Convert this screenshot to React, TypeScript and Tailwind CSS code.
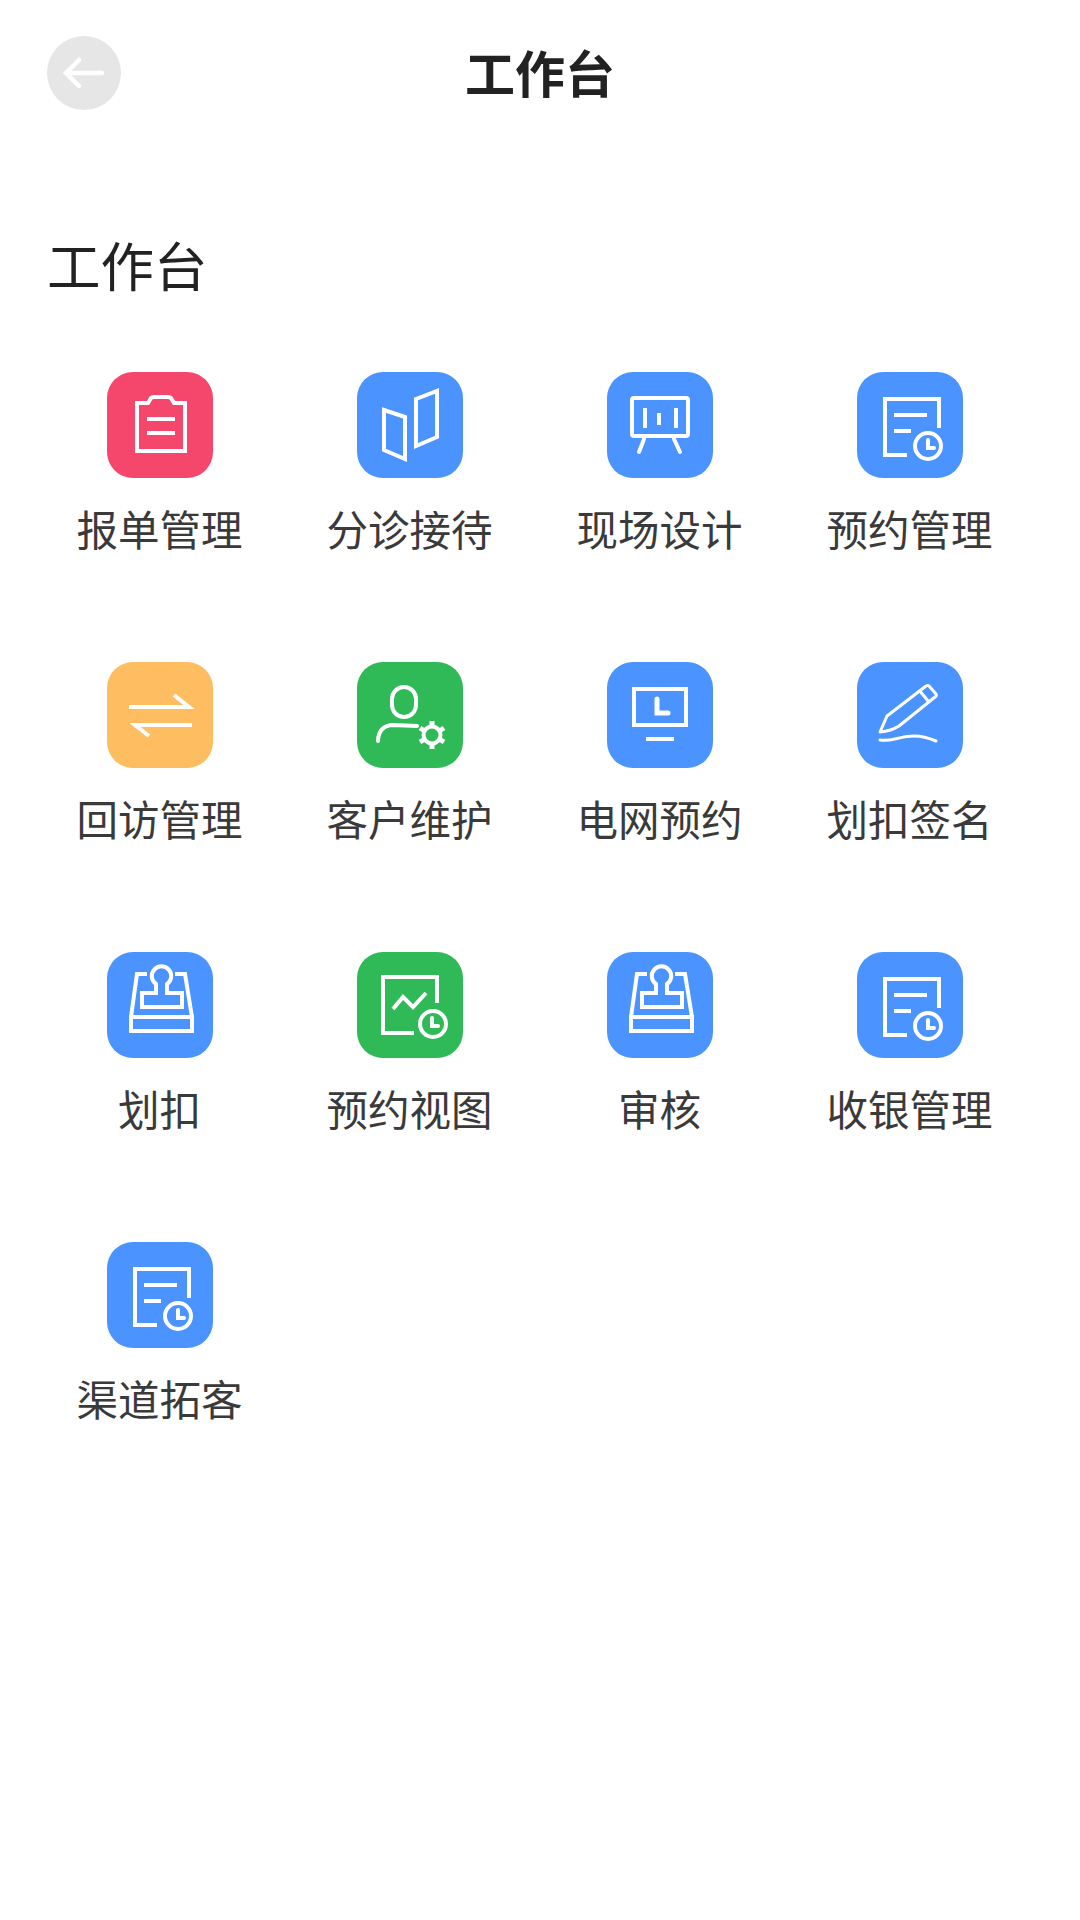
import React from 'react';

const BLUE = 'bg-[#4b93ff]';
const GREEN = 'bg-[#2fba57]';

function Svg({ children }: { children: React.ReactNode }) {
  return (
    <svg viewBox="0 0 106 106" className="w-full h-full" fill="none" stroke="#fff" strokeWidth="4">
      {children}
    </svg>
  );
}

const ClipboardIcon = () => (
  <Svg>
    <path d="M30 31h11l3-5q1-1 3-1h14q2 0 3 1l3 5h11v48H30z" />
    <path d="M40 47h28M40 61h28" />
  </Svg>
);

const MapIcon = () => (
  <Svg>
    <path d="M27 38l21 7v42l-21-9z" />
    <path d="M59 27l21-8v46l-21 9z" />
  </Svg>
);

const BoardIcon = () => (
  <Svg>
    <rect x="25" y="26" width="56" height="38" rx="2" />
    <path d="M38 36v20M52 41v12M69 36v20" />
    <path d="M37 67l-5 13M67 67l6 13" strokeLinecap="round" />
  </Svg>
);

const ReportClockIcon = () => (
  <Svg>
    <path d="M50 83H28V27h54v29" />
    <path d="M37 43h33M37 59h17" />
    <circle cx="71" cy="74" r="13" />
    <path d="M71 68v8h6" strokeLinecap="round" />
  </Svg>
);

const SwapIcon = () => (
  <Svg>
    <path d="M22 45h60L67 33" />
    <path d="M85 63H28l14 11" />
  </Svg>
);

const UserGearIcon = () => (
  <Svg>
    <rect x="35" y="25" width="24" height="30" rx="12" />
    <path d="M21 79c0-10 6-16 15-16l24 1" strokeLinecap="round" />
    <circle cx="75" cy="73" r="8.5" />
    <path d="M75 59v5M75 82v5M87 66l-4 2.500M63 66l4 2.500M87 80l-4-2.500M63 80l4-2.500" strokeWidth="5" />
  </Svg>
);

const MonitorIcon = () => (
  <Svg>
    <rect x="27" y="27" width="52" height="36" />
    <path d="M50 37v14h11" strokeWidth="5" strokeLinecap="round" />
    <path d="M39 77h28" />
  </Svg>
);

const PenIcon = () => (
  <Svg>
    <path d="M23 70l7-16 39-30q2-1 3 0l7 8q1 2-1 3L42 64q-8 5-19 6z" strokeWidth="3" strokeLinejoin="round" />
    <path d="M62 28l10 12" strokeWidth="3" />
    <path d="M23 78c11 2 20-4 34-4 8 0 15 2 22 5" strokeWidth="3" strokeLinecap="round" />
  </Svg>
);

const StampIcon = () => (
  <Svg>
    <path d="M40 22H30L24 65M68 22h10l7 43" />
    <path d="M24 65h61v14H24z" />
    <path d="M35 41H49V32A9.700 9.700 0 1 1 60 32V41H75V55H35z" />
  </Svg>
);

const ChartClockIcon = () => (
  <Svg>
    <path d="M57 81H26V25h54v26" />
    <path d="M36 57l10-12 10 10 13-14" />
    <circle cx="76" cy="72" r="13" />
    <path d="M75 66v8h6" strokeLinecap="round" />
  </Svg>
);

const items: { label: string; color: string; Icon: () => React.ReactElement }[] = [
  { label: '报单管理', color: 'bg-[#f4476b]', Icon: ClipboardIcon },
  { label: '分诊接待', color: BLUE, Icon: MapIcon },
  { label: '现场设计', color: BLUE, Icon: BoardIcon },
  { label: '预约管理', color: BLUE, Icon: ReportClockIcon },
  { label: '回访管理', color: 'bg-[#ffbd62]', Icon: SwapIcon },
  { label: '客户维护', color: GREEN, Icon: UserGearIcon },
  { label: '电网预约', color: BLUE, Icon: MonitorIcon },
  { label: '划扣签名', color: BLUE, Icon: PenIcon },
  { label: '划扣', color: BLUE, Icon: StampIcon },
  { label: '预约视图', color: GREEN, Icon: ChartClockIcon },
  { label: '审核', color: BLUE, Icon: StampIcon },
  { label: '收银管理', color: BLUE, Icon: ReportClockIcon },
  { label: '渠道拓客', color: BLUE, Icon: ReportClockIcon },
];

export default function App() {
  return (
    <div className="w-[1080px] h-[1920px] bg-white font-['Noto_Sans_CJK_SC','Noto_Sans',sans-serif] overflow-hidden">
      {/* Header */}
      <div className="grid grid-cols-[1fr_auto_1fr] items-center h-[146px] px-[47px]">
        <div className="w-[74px] h-[74px] rounded-full bg-[#e6e6e6] flex items-center justify-center">
          <svg viewBox="0 0 44 34" className="w-[44px] h-[34px]" fill="none" stroke="#fff" strokeWidth="4.500" strokeLinecap="round">
            <path d="M4 17h36M17 4L4 17l13 13" />
          </svg>
        </div>
        <h1 className="text-[50px] font-bold text-[#222] leading-[60px] -mt-[5px]">工作台</h1>
        <div />
      </div>

      <h2 className="mt-[82px] pl-[47px] text-[53.500px] text-[#222] leading-[72px]">工作台</h2>

      <div className="mt-[72px] pl-[35px] pr-[45px] grid grid-cols-4 gap-y-[104px]">
        {items.map(({ label, color, Icon }) => (
          <div key={label} className="flex flex-col items-center">
            <div className={`w-[106px] h-[106px] rounded-[26px] ${color}`}>
              <Icon />
            </div>
            <div className="mt-[22px] mb-[2px] -ml-[1px] text-[41.500px] leading-[56px] text-[#3a3a3a]">{label}</div>
          </div>
        ))}
      </div>
    </div>
  );
}
